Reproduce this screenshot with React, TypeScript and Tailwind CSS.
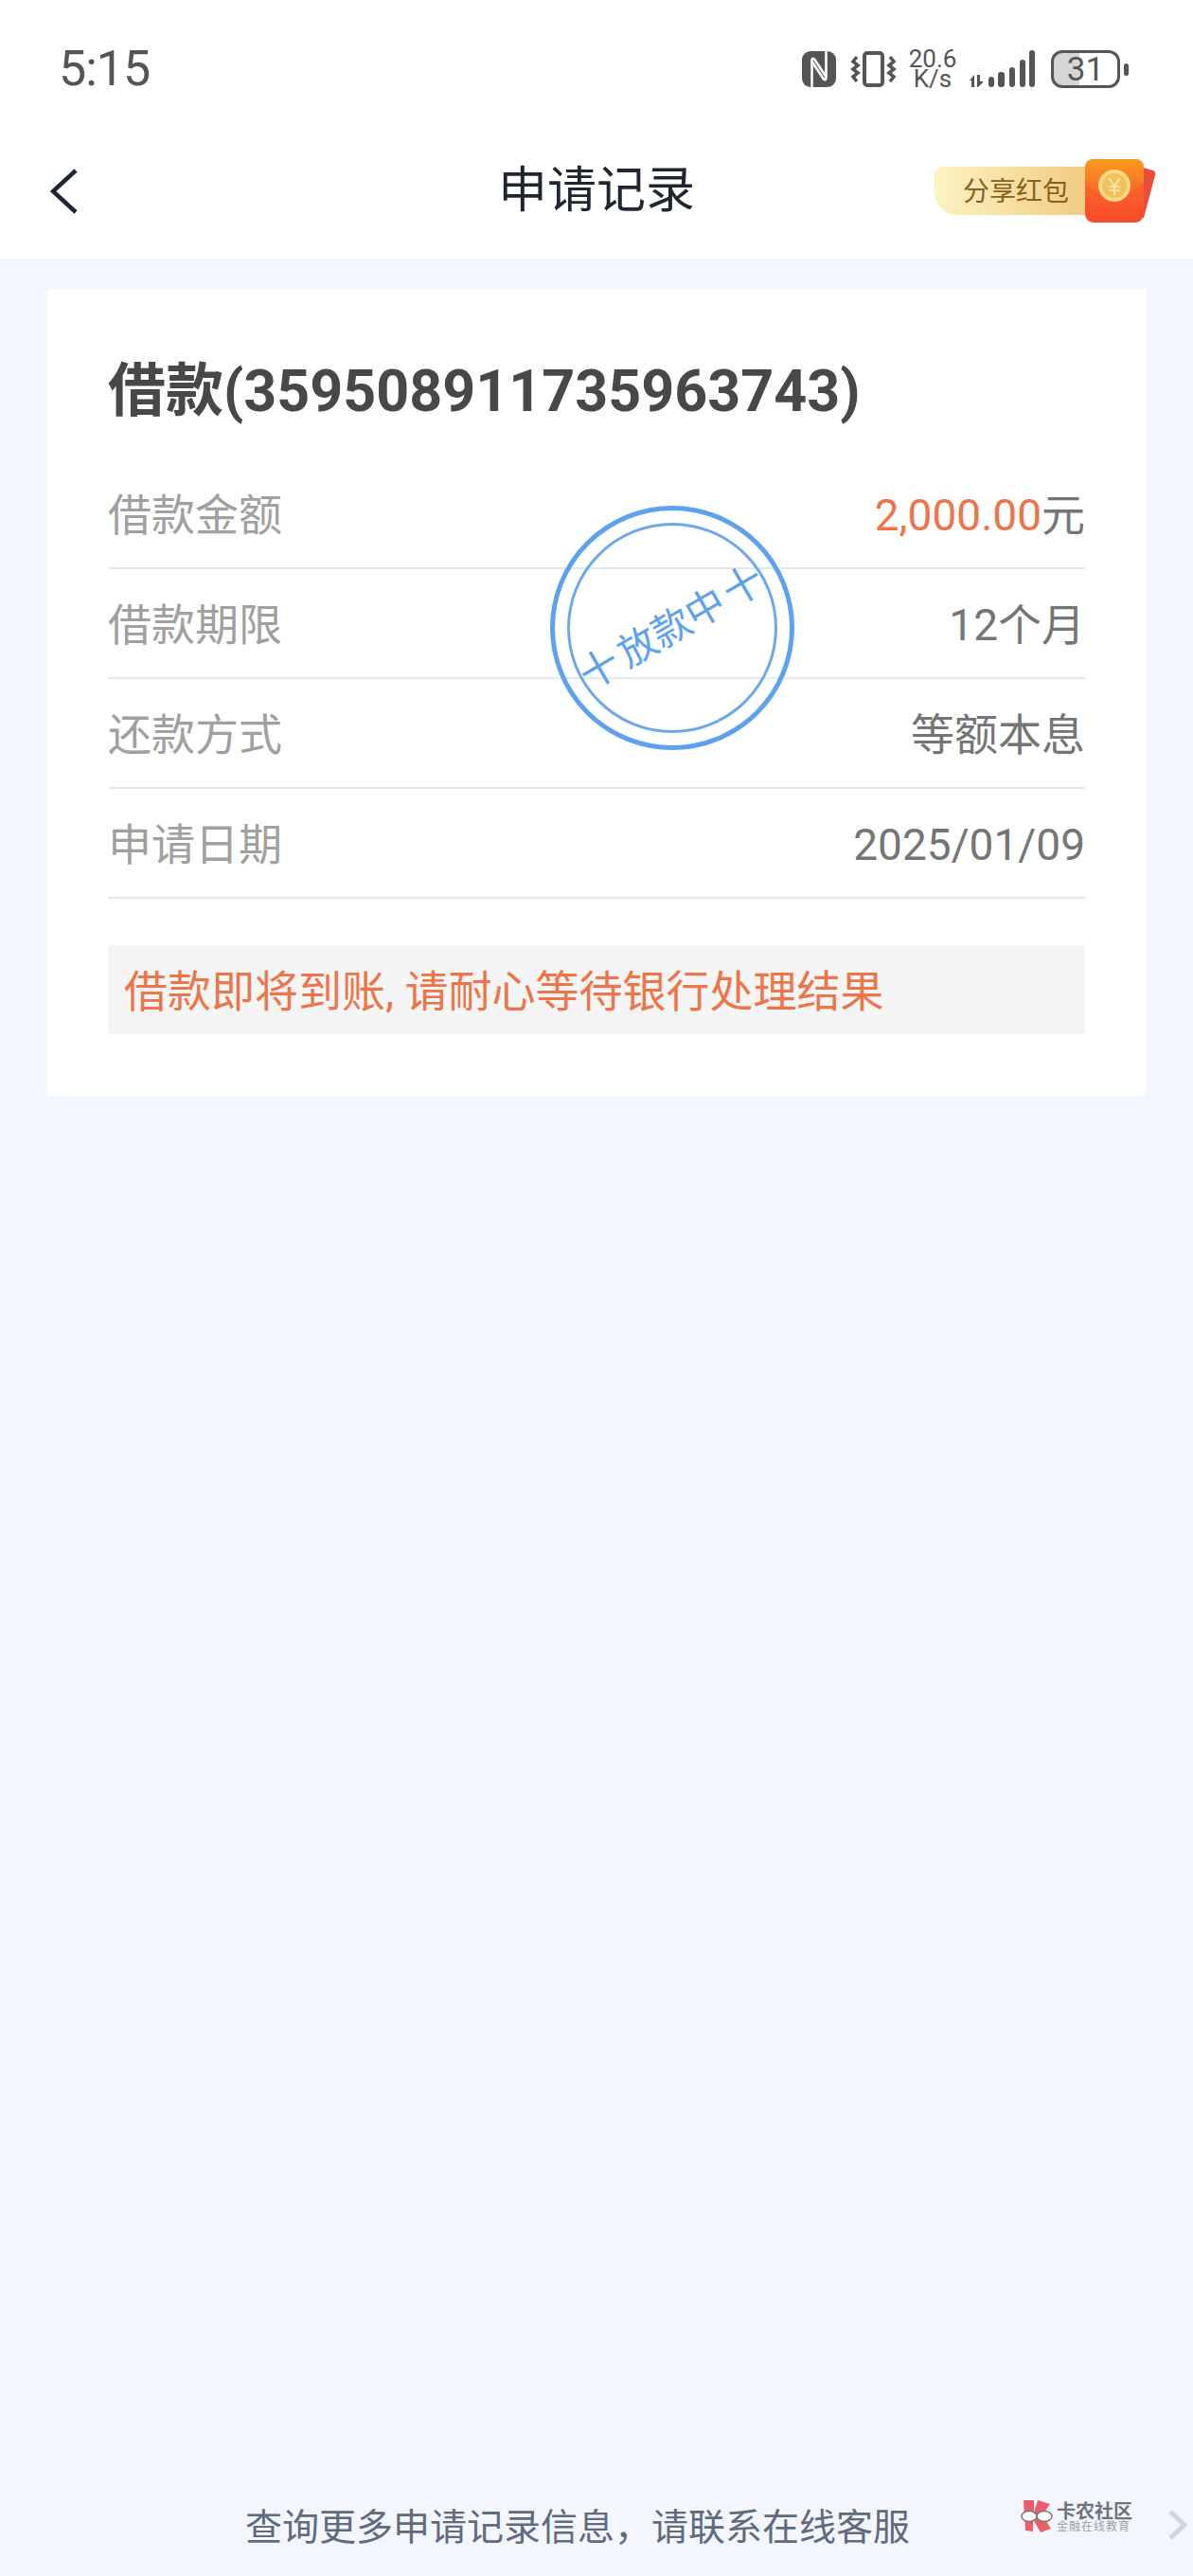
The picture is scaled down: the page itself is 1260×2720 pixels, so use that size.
const sans = "font-['Roboto','Noto_Sans_CJK_SC',sans-serif]";

const rows = [
  { label: '借款期限', value: '12个月' },
  { label: '还款方式', value: '等额本息' },
  { label: '申请日期', value: '2025/01/09' },
];

function StatusIcons() {
  return (
    <div className="flex items-center text-[#555555]">
      {/* NFC */}
      <svg width="36" height="38" viewBox="0 0 36 38" fill="none">
        <rect width="36" height="38" rx="9" fill="#555555" />
        <path d="M10.5 38V10q0-4 3-1l12 18" stroke="#fff" strokeWidth="2.6" />
        <path d="M25.5 0v28q0 4-3 1L10.5 11" stroke="#fff" strokeWidth="2.6" />
      </svg>
      {/* vibrate */}
      <svg className="ml-[15px]" width="49" height="40" viewBox="0 0 49 40" fill="none" stroke="#555555">
        <rect x="15" y="3" width="19" height="34" rx="3" strokeWidth="4" />
        <path d="M7 7L3 12l5 4-5 4 5 4-5 4 4 5" strokeWidth="3.6" />
        <path d="M42 7l4 5-5 4 5 4-5 4 5 4-4 5" strokeWidth="3.6" />
      </svg>
      {/* speed */}
      <div className="ml-[13px] flex w-[50px] flex-col items-center text-[26px] leading-[21px]">
        <span>20.6</span>
        <span>K/s</span>
      </div>
      {/* signal */}
      <svg className="ml-[13px]" width="72" height="40" viewBox="0 0 72 40" fill="#555555">
        <path d="M1 32l5-6v13H3v-7zM9 26h3v7h4l-6 6h-1z" />
        <rect x="21" y="28" width="6" height="11" rx="3" />
        <rect x="31" y="23" width="7" height="16" rx="3" />
        <rect x="43" y="18" width="6" height="21" rx="3" />
        <rect x="54" y="10" width="6" height="29" rx="3" />
        <rect x="64" y="0" width="6" height="39" rx="3" />
      </svg>
      {/* battery */}
      <div className="ml-[15px] flex h-[40px] w-[73px] items-center justify-center rounded-[12px] border-[3px] border-[#555555] bg-[linear-gradient(90deg,#d6d6d6_40%,transparent_40%)] text-[35px] leading-none">
        31
      </div>
      <div className="ml-[4px] h-[13px] w-[5px] rounded-full bg-[#555555]" />
    </div>
  );
}

function RedPacket() {
  return (
    <svg className="relative -ml-[4px]" width="75" height="67" viewBox="0 0 75 67">
      <defs>
        <linearGradient id="packet" x1="0" y1="0" x2="0" y2="1">
          <stop offset="0" stopColor="#fb7a22" />
          <stop offset="1" stopColor="#f9492c" />
        </linearGradient>
        <linearGradient id="flap" x1="0" y1="0" x2="0" y2="1">
          <stop offset="0" stopColor="#fb9c1c" />
          <stop offset="1" stopColor="#f8602a" />
        </linearGradient>
      </defs>
      <path d="M58 8l14 4q3 1 2 5L62 62H50z" fill="#ea4d3c" />
      <rect width="62" height="67" rx="9" fill="url(#packet)" />
      <path d="M0 9q0-9 9-9h44q9 0 9 9v15q-31 34-62 0z" fill="url(#flap)" />
      <circle cx="31" cy="28" r="17" fill="#fbd987" />
      <circle cx="31" cy="28" r="13" fill="#f2c25a" />
      <path d="M25 20l6 8 6-8M25 29h12M25 33h12M31 28v10" fill="none" stroke="#fbe3a2" strokeWidth="2" />
    </svg>
  );
}

function Stamp() {
  return (
    <div className="absolute left-[531px] top-[229px] flex h-[258px] w-[258px] items-center justify-center rounded-full border-[5px] border-[#5ea2ee]">
      <div className="flex h-[222px] w-[222px] items-center justify-center rounded-full border-[3px] border-[#6ea8ea]">
        <div className="flex -rotate-30 items-center gap-[5px] whitespace-nowrap leading-none text-[#5ea2ee]">
          <span className="text-[42px]">十</span>
          <span className="text-[41px]">放款中</span>
          <span className="text-[42px]">十</span>
        </div>
      </div>
    </div>
  );
}

function Watermark() {
  return (
    <div className="absolute bottom-[37px] right-[5px] flex items-center">
      <svg width="36" height="36" viewBox="0 0 36 36">
        <path d="M4 1h11v13l4-13 13 4-8 12 9 14-11 4-8-14v13L6 33z" fill="#ec5f68" />
        <ellipse cx="10" cy="18" rx="8" ry="5.5" fill="#fff" stroke="#777" strokeWidth="1.5" />
        <ellipse cx="26" cy="18" rx="8" ry="5.5" fill="#fff" stroke="#777" strokeWidth="1.5" />
      </svg>
      <div className="ml-[3px] flex w-[80px] flex-col">
        <span className="text-[20px] font-bold leading-[22px] text-[#6d7380]">卡农社区</span>
        <span className="text-[12px] leading-[11px] tracking-[1px] text-[#9aa0aa]">金融在线教育</span>
      </div>
      <svg className="ml-[37px] mt-[18px]" width="22" height="34" viewBox="0 0 22 34" fill="none">
        <path d="M3 3l15 14L3 31" stroke="#d0d4dc" strokeWidth="5" />
      </svg>
    </div>
  );
}

export default function App() {
  return (
    <div className={`relative flex min-h-[2720px] w-[1260px] flex-col bg-[#f3f6fd] ${sans}`}>
      {/* Status bar */}
      <div className="flex h-[146px] items-center justify-between bg-white pl-[62px] pr-[68px]">
        <span className="text-[52px] leading-none tracking-[-1px] text-[#555555]">5:15</span>
        <StatusIcons />
      </div>

      {/* Title bar */}
      <div className="grid h-[127px] grid-cols-[1fr_auto_1fr] items-center bg-white pb-[16px]">
        <div className="pl-[53px]">
          <svg className="block" width="30" height="48" viewBox="0 0 30 48" fill="none">
            <path d="M27 2L3 24l24 22" stroke="#1f2630" strokeWidth="4.5" />
          </svg>
        </div>
        <h1 className="text-[52px] font-normal leading-none text-[#1f2630]">申请记录</h1>
        <div className="flex items-center justify-end pr-[39px]">
          <div className="flex h-[51px] w-[163px] items-center rounded-bl-[24px] rounded-tl-[8px] bg-[linear-gradient(90deg,#fdf3c2,#f0cb80)] pl-[30px] pt-[3px] text-[28px] leading-none text-[#8a5f20]">
            分享红包
          </div>
          <RedPacket />
        </div>
      </div>

      {/* Card */}
      <div className="relative mx-[50px] mt-[32px] bg-white px-[64px] pb-[65px] pt-[78px]">
        <h2 className="text-[61px] font-bold leading-[60px] text-[#484848]">借款(359508911735963743)</h2>
        <div className="mt-[42px] flex h-[116px] items-center justify-between border-b-2 border-[#e0e9ec] pt-[3px] text-[46px] leading-none">
          <span className="text-[#a0a0a0]">借款金额</span>
          <span className="text-[#757575]">
            <span className="text-[#ed7549]">2,000.00</span>元
          </span>
        </div>
        {rows.map((row) => (
          <div
            key={row.label}
            className="flex h-[116px] items-center justify-between border-b-2 border-[#e0e9ec] pt-[3px] text-[46px] leading-none"
          >
            <span className="text-[#a0a0a0]">{row.label}</span>
            <span className="text-[#757575]">{row.value}</span>
          </div>
        ))}
        <div className="mt-[49px] flex h-[94px] items-center bg-[#f5f5f5] pl-[17px] pt-[3px] text-[46px] leading-none text-[#ed7549]">
          借款即将到账, 请耐心等待银行处理结果
        </div>
        <Stamp />
      </div>

      {/* Footer */}
      <div className="mt-auto pb-[28px] pl-[259px] text-[39px] leading-[46px] text-[#5f6b7e]">
        查询更多申请记录信息，请联系在线客服
      </div>
      <Watermark />
    </div>
  );
}
